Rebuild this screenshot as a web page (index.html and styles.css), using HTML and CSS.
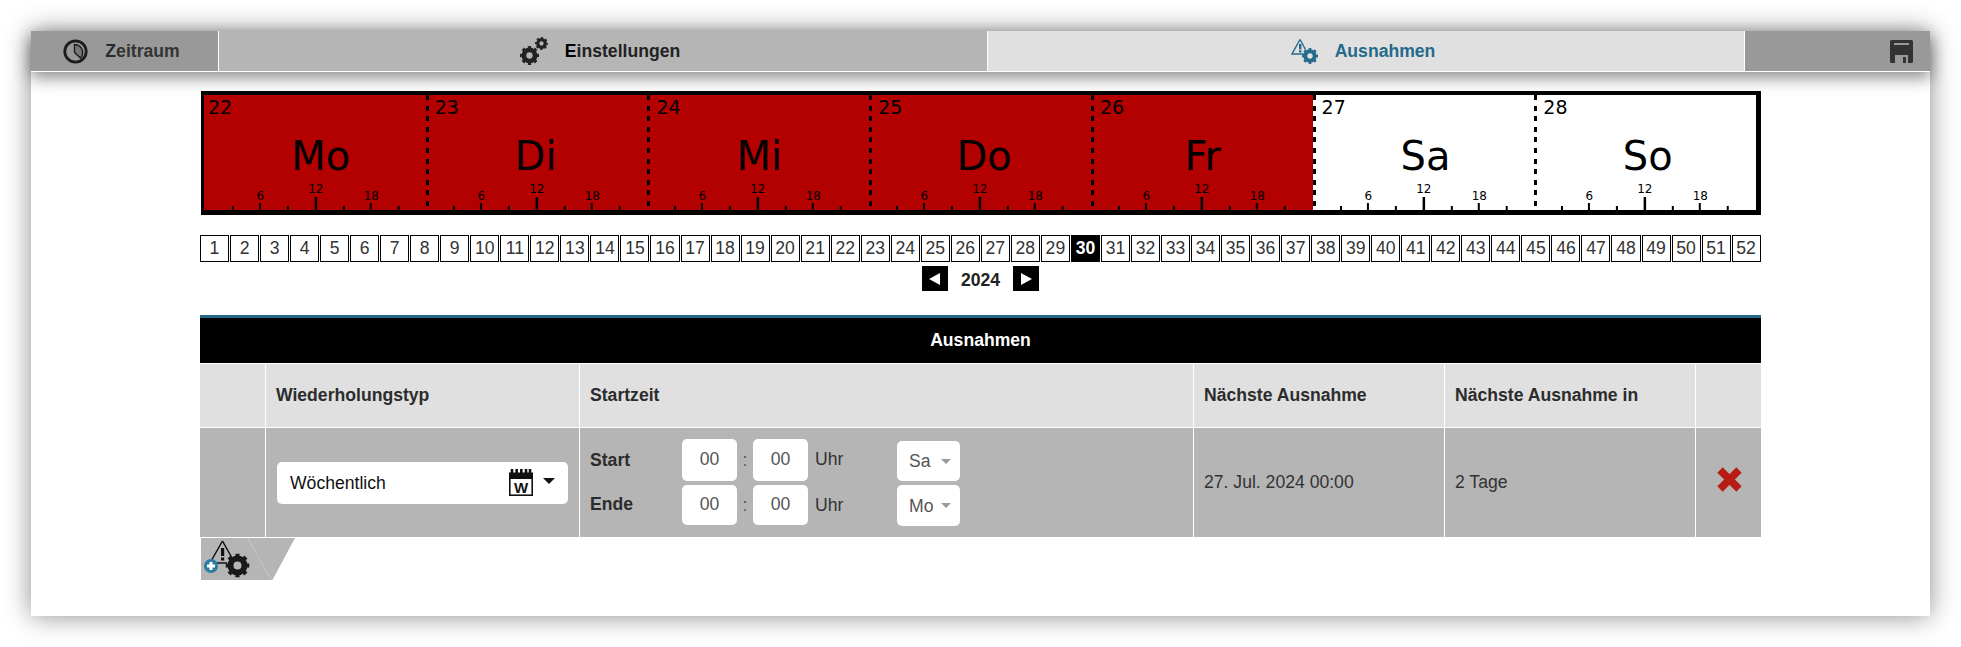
FILE: index.html
```html
<!DOCTYPE html>
<html lang="de">
<head>
<meta charset="utf-8">
<title>Ausnahmen</title>
<link rel="stylesheet" href="styles.css">
</head>
<body>
<svg class="defs" width="0" height="0" aria-hidden="true">
  <symbol id="gear" viewBox="0 0 24 24">
    <circle cx="12" cy="12" r="7" fill="none" stroke="currentColor" stroke-width="6"/>
    <circle cx="12" cy="12" r="10.5" fill="none" stroke="currentColor" stroke-width="3" pathLength="16" stroke-dasharray="1 1" stroke-dashoffset="0.5"/>
  </symbol>
</svg>
<main class="panel">
  <nav class="tabs">
    <div class="tab tab-time">
      <svg class="ico ico-clock" viewBox="0 0 25 25"><circle cx="12.5" cy="12.5" r="10.7" fill="none" stroke="#1c1c1c" stroke-width="2.8"/><path d="M11.5 5.5V13.5L17.5 19A8 8 0 0 0 19.5 12 8 8 0 0 0 11.5 5.5Z" fill="#777" stroke="#1c1c1c" stroke-width="1.4"/></svg>
      <span><b class="ini">Z</b>eitraum</span>
    </div>
    <div class="tab tab-set">
      <svg class="ico ico-gears" viewBox="0 0 28 28"><use href="#gear" x="0" y="9" width="19" height="19"/><use href="#gear" x="15" y="0" width="13" height="13"/></svg>
      <span><b class="ini-dark">E</b>instellungen</span>
    </div>
    <div class="tab tab-exc">
      <svg class="ico ico-warn" viewBox="0 0 27 26"><path d="M9 1.5L1 16H15" fill="none" stroke="currentColor" stroke-width="1.4"/><path d="M9 1.5L14.5 11.5" fill="none" stroke="currentColor" stroke-width="1.4"/><rect x="8" y="6" width="2.4" height="5.4" fill="currentColor"/><rect x="8" y="12.3" width="2.4" height="2.2" fill="currentColor"/><use href="#gear" x="11" y="10" width="16" height="16"/></svg>
      <span>Ausnahmen</span>
    </div>
    <div class="tab tab-save">
      <svg class="ico ico-save" viewBox="0 0 23 23"><path d="M1.5 0H21.5A1.5 1.5 0 0 1 23 1.5V21.5A1.5 1.5 0 0 1 21.5 23H1.5A1.5 1.5 0 0 1 0 21.5V1.5A1.5 1.5 0 0 1 1.5 0Z" fill="#333"/><rect x="4" y="3" width="15" height="2" fill="#999"/><rect x="5" y="15" width="13" height="8" fill="#999"/><rect x="13" y="17" width="3" height="6" fill="#333"/></svg>
    </div>
  </nav>

  <div class="content">
    <section class="week">
      <div class="day busy first">
        <span class="num">22</span><span class="name name-mo">Mo</span>
        <svg class="ruler" viewBox="0 0 222 40"><path class="t" d="M29 40v-4M84 40v-4M140 40v-4M195 40v-4"/><path class="t" d="M56 40v-7M167 40v-7"/><path class="t t12" d="M112 40v-13"/><text class="h" x="56.500" y="30">6</text><text class="h" x="112" y="23">12</text><text class="h" x="167.500" y="30">18</text></svg>
      </div>
      <div class="day busy">
        <span class="num">23</span><span class="name name-di">Di</span>
        <svg class="ruler" viewBox="0 0 222 40"><path class="t" d="M28 40v-4M83 40v-4M139 40v-4M194 40v-4"/><path class="t" d="M55 40v-7M166 40v-7"/><path class="t t12" d="M111 40v-13"/><text class="h" x="55.500" y="30">6</text><text class="h" x="111" y="23">12</text><text class="h" x="166.500" y="30">18</text></svg>
      </div>
      <div class="day busy">
        <span class="num">24</span><span class="name">Mi</span>
        <svg class="ruler" viewBox="0 0 222 40"><path class="t" d="M28 40v-4M83 40v-4M139 40v-4M194 40v-4"/><path class="t" d="M55 40v-7M166 40v-7"/><path class="t t12" d="M111 40v-13"/><text class="h" x="55.500" y="30">6</text><text class="h" x="111" y="23">12</text><text class="h" x="166.500" y="30">18</text></svg>
      </div>
      <div class="day busy">
        <span class="num">25</span><span class="name name-do">Do</span>
        <svg class="ruler" viewBox="0 0 222 40"><path class="t" d="M28 40v-4M83 40v-4M139 40v-4M194 40v-4"/><path class="t" d="M55 40v-7M166 40v-7"/><path class="t t12" d="M111 40v-13"/><text class="h" x="55.500" y="30">6</text><text class="h" x="111" y="23">12</text><text class="h" x="166.500" y="30">18</text></svg>
      </div>
      <div class="day busy">
        <span class="num">26</span><span class="name">Fr</span>
        <svg class="ruler" viewBox="0 0 222 40"><path class="t" d="M28 40v-4M83 40v-4M139 40v-4M194 40v-4"/><path class="t" d="M55 40v-7M166 40v-7"/><path class="t t12" d="M111 40v-13"/><text class="h" x="55.500" y="30">6</text><text class="h" x="111" y="23">12</text><text class="h" x="166.500" y="30">18</text></svg>
      </div>
      <div class="day">
        <span class="num">27</span><span class="name name-sa">Sa</span>
        <svg class="ruler" viewBox="0 0 222 40"><path class="t" d="M28 40v-4M83 40v-4M139 40v-4M194 40v-4"/><path class="t" d="M55 40v-7M166 40v-7"/><path class="t t12" d="M111 40v-13"/><text class="h" x="55.500" y="30">6</text><text class="h" x="111" y="23">12</text><text class="h" x="166.500" y="30">18</text></svg>
      </div>
      <div class="day">
        <span class="num">28</span><span class="name name-so">So</span>
        <svg class="ruler" viewBox="0 0 222 40"><path class="t" d="M28 40v-4M83 40v-4M139 40v-4M194 40v-4"/><path class="t" d="M55 40v-7M166 40v-7"/><path class="t t12" d="M111 40v-13"/><text class="h" x="55.500" y="30">6</text><text class="h" x="111" y="23">12</text><text class="h" x="166.500" y="30">18</text></svg>
      </div>
    </section>

    <div class="weeks">
      <a>1</a><a>2</a><a>3</a><a>4</a><a>5</a><a>6</a><a>7</a><a>8</a><a>9</a><a>10</a><a>11</a><a>12</a><a>13</a>
      <a>14</a><a>15</a><a>16</a><a>17</a><a>18</a><a>19</a><a>20</a><a>21</a><a>22</a><a>23</a><a>24</a><a>25</a><a>26</a>
      <a>27</a><a>28</a><a>29</a><a class="cur">30</a><a>31</a><a>32</a><a>33</a><a>34</a><a>35</a><a>36</a><a>37</a><a>38</a><a>39</a>
      <a>40</a><a>41</a><a>42</a><a>43</a><a>44</a><a>45</a><a>46</a><a>47</a><a>48</a><a>49</a><a>50</a><a>51</a><a>52</a>
    </div>

    <div class="year">
      <span class="arrow prev"></span>
      <strong>2024</strong>
      <span class="arrow next"></span>
    </div>

    <section class="exc">
      <h2 class="exc-title">Ausnahmen</h2>
      <div class="grid head">
        <div class="cell"></div>
        <div class="cell">Wiederholungstyp</div>
        <div class="cell">Startzeit</div>
        <div class="cell">Nächste Ausnahme</div>
        <div class="cell">Nächste Ausnahme in</div>
        <div class="cell"></div>
      </div>
      <div class="grid row">
        <div class="cell"></div>
        <div class="cell">
          <div class="picker">
            <span class="picker-text">Wöchentlich</span>
            <svg class="ico-cal" viewBox="0 0 24 27"><path d="M3 0v4M7.7 0v4M12.3 0v4M17 0v4M21 0v4" stroke="#111" stroke-width="2.6" fill="none"/><rect x="0" y="3.5" width="24" height="6.5" fill="#111"/><rect x="0.8" y="8" width="22.4" height="18.2" fill="none" stroke="#111" stroke-width="1.6"/><text class="cal-w" x="12" y="23.500">W</text></svg>
            <i class="caret"></i>
          </div>
        </div>
        <div class="cell cell-time">
          <div class="times">
            <b class="lbl lbl-a">Start</b><span class="box">00</span><span class="sep">:</span><span class="box">00</span><span class="uhr">Uhr</span><span class="sel sel-a">Sa<i class="caret-g"></i></span>
            <b class="lbl">Ende</b><span class="box box-b">00</span><span class="sep">:</span><span class="box box-b">00</span><span class="uhr">Uhr</span><span class="sel">Mo<i class="caret-g"></i></span>
          </div>
        </div>
        <div class="cell">27. Jul. 2024 00:00</div>
        <div class="cell">2 Tage</div>
        <div class="cell cell-del">
          <svg class="ico-x" viewBox="0 0 25 25"><path d="M3 3L22 22M22 3L3 22" stroke="#b71c14" stroke-width="7.500" fill="none"/></svg>
        </div>
      </div>
      <div class="add">
        <svg class="ico-add" viewBox="0 0 50 42"><path d="M21.500 3L9 25H26M21.500 3L31 20" fill="none" stroke="#111" stroke-width="1.5"/><rect x="20" y="10" width="3.200" height="8" fill="#111"/><rect x="20" y="19.500" width="3.200" height="3" fill="#111"/><use class="add-gear" href="#gear" x="24.500" y="15.500" width="24" height="24"/><circle cx="10" cy="28" r="7" fill="#2b7ba3"/><path d="M10 24v8M6 28h8" stroke="#fff" stroke-width="3"/></svg>
      </div>
    </section>
  </div>
</main>
</body>
</html>
```

FILE: styles.css
```css
* { box-sizing: border-box; }
html, body { margin: 0; padding: 0; background: #fff; }
body {
  padding: 31px;
  font-family: "Liberation Sans", Arial, sans-serif;
  font-size: 17.6px;
  color: #333;
  overflow: hidden;
}
.defs { display: block; height: 0; }

.panel {
  background: #fff;
  height: 585px;
  box-shadow: 0 0 25px rgba(0, 0, 0, .45);
}

/* top tabs */
.tabs {
  display: flex;
  height: 41px;
  border-bottom: 1px solid #fff;
  box-shadow: 0 6px 16px rgba(0, 0, 0, .45);
  font-weight: 700;
}
.tab {
  display: flex;
  align-items: center;
  justify-content: center;
  gap: 17px;
  padding-right: 6px;
  background: #b5b5b5;
}
.tab + .tab { border-left: 1px solid #fff; }
.tab-time { width: 187px; background: #999; color: #333; }
.tab-set { width: 769px; color: #222; }
.tab-exc { width: 757px; background: #e0e0e0; color: #256a8a; }
.tab-save { width: 186px; background: #999; justify-content: flex-end; padding-right: 17px; }
.ini { color: #2a2a2a; }
.ini-dark { color: #000; }
.ico { display: block; flex: none; }
.ico-clock { width: 25px; height: 25px; }
.ico-gears { width: 28px; height: 28px; color: #222; }
.ico-warn { width: 27px; height: 26px; color: #256a8a; }
.ico-save { width: 23px; height: 23px; }

.content { width: 1561px; margin-left: 169px; }

/* week strip */
.week {
  display: flex;
  height: 124px;
  margin: 19px 0 0 1px;
  border: solid #000;
  border-width: 4px 5px 5px 3px;
  background: #fff;
  font-family: "DejaVu Sans", Verdana, sans-serif;
  color: #000;
}
.day {
  flex: 1 1 0;
  min-width: 0;
  display: flex;
  flex-direction: column;
  background-image: repeating-linear-gradient(#000 0 5px, transparent 5px 10.6px);
  background-size: 3px 100%;
  background-repeat: no-repeat;
}
.day.first { background-image: none; }
.busy { background-color: #b30000; }
.num {
  height: 24px;
  padding-left: 9px;
  font-size: 19px;
  line-height: 24px;
}
.first .num { padding-left: 4px; }
.name {
  height: 51px;
  padding: 11px 0 0 2px;
  font-size: 40px;
  line-height: 52px;
  text-align: center;
}
.name-mo { padding-left: 12px; }
.name-do { padding-left: 8px; }
.name-di { padding-right: 2px; padding-left: 0; }
.name-sa { padding-left: 4px; }
.name-so { padding-left: 5px; }
.ruler { display: block; width: 100%; height: 40px; }
.t { stroke: #000; stroke-width: 2; fill: none; }
.t12 { stroke-width: 2.5; }
.h { font-size: 12px; text-anchor: middle; fill: #000; }

/* week numbers */
.weeks {
  display: flex;
  gap: 1px;
  margin-top: 20px;
}
.weeks a {
  flex: 1 1 0;
  min-width: 0;
  height: 27px;
  border: 1px solid #000;
  line-height: 25px;
  text-align: center;
  color: #333;
}
.weeks a.cur { background: #000; color: #fff; font-weight: 700; }

.year {
  display: flex;
  justify-content: center;
  align-items: center;
  gap: 13px;
  height: 25px;
  margin-top: 4px;
  color: #222;
}
.year strong { padding-top: 3px; }
.arrow {
  display: flex;
  align-items: center;
  justify-content: center;
  width: 26px;
  height: 25px;
  background: #000;
}
.arrow::before {
  content: "";
  border-style: solid;
  border-color: transparent;
  border-width: 6px 0 6px 11px;
  border-left-color: #fff;
}
.prev::before {
  border-width: 6px 11px 6px 0;
  border-left-color: transparent;
  border-right-color: #fff;
}

/* table */
.exc { margin-top: 24px; border-top: 3px solid #24688a; }
.exc-title {
  margin: 0 0 1px;
  height: 45px;
  background: #000;
  color: #fff;
  font-size: 17.6px;
  line-height: 45px;
  text-align: center;
}
.grid {
  display: grid;
  grid-template-columns: 65px 314px 614px 251px 251px 66px;
}
.head { height: 64px; background: #e0e0e0; font-weight: 700; border-bottom: 1px solid #fff; color: #2c2c2c; }
.row { height: 109px; background: #b5b5b5; }
.cell {
  display: flex;
  align-items: center;
  padding-left: 10px;
  border-left: 1px solid #fff;
}
.cell:first-child { border-left: 0; }
.head .cell { padding-bottom: 1px; }
.cell-time { align-items: flex-start; padding-top: 11px; }
.cell-del { justify-content: center; align-items: flex-start; padding: 39px 0 0 1px; }

.picker {
  display: flex;
  align-items: center;
  width: 291px;
  height: 42px;
  margin-left: 1px;
  padding: 0 13px 0 13px;
  background: #fff;
  border-radius: 5px;
  color: #111;
}
.picker-text { flex: 1; padding-top: 1px; }
.ico-cal { width: 24px; height: 27px; display: block; }
.cal-w { font-size: 15px; font-weight: 700; text-anchor: middle; fill: #111; }
.caret {
  margin-left: 10px;
  margin-bottom: 3px;
  border-style: solid;
  border-color: #111 transparent transparent;
  border-width: 6px 6px 0;
}

.times {
  display: grid;
  grid-template-columns: 92px 55px 16px 55px 89px 63px;
  grid-template-rows: 42px 41px;
  row-gap: 4px;
  align-items: center;
}
.lbl { color: #2c2c2c; padding-bottom: 3px; }
.lbl-a { padding: 1px 0 0; }
.box {
  height: 42px;
  line-height: 41px;
  background: #fff;
  border-radius: 5px;
  text-align: center;
  color: #555;
}
.box-b { height: 40px; align-self: start; line-height: 39px; }
.sep { text-align: center; color: #555; }
.uhr { padding-left: 7px; padding-bottom: 1px; }
.sel {
  position: relative;
  height: 41px;
  padding-left: 12px;
  line-height: 42px;
  background: #fff;
  border-radius: 5px;
  color: #555;
}
.sel-a { height: 40px; align-self: end; line-height: 41px; }
.caret-g {
  position: absolute;
  right: 9px;
  top: 18px;
  border-style: solid;
  border-color: #999 transparent transparent;
  border-width: 5px 5px 0;
}
.ico-x { display: block; width: 25px; height: 25px; }

/* add button */
.add {
  position: relative;
  width: 94px;
  height: 42px;
  margin: 1px 0 0 1px;
  background: #b5b5b5;
  clip-path: polygon(0 0, 100% 0, 76% 100%, 0 100%);
}
.add::after {
  content: "";
  position: absolute;
  left: 47px;
  top: 0;
  width: 23px;
  height: 42px;
  background: linear-gradient(to top left, transparent calc(50% - .5px), #d4d4d4 50%, transparent calc(50% + .5px));
  transform: scaleX(-1);
}
.ico-add { display: block; width: 50px; height: 42px; }
.add-gear { color: #1a1a1a; }
```
